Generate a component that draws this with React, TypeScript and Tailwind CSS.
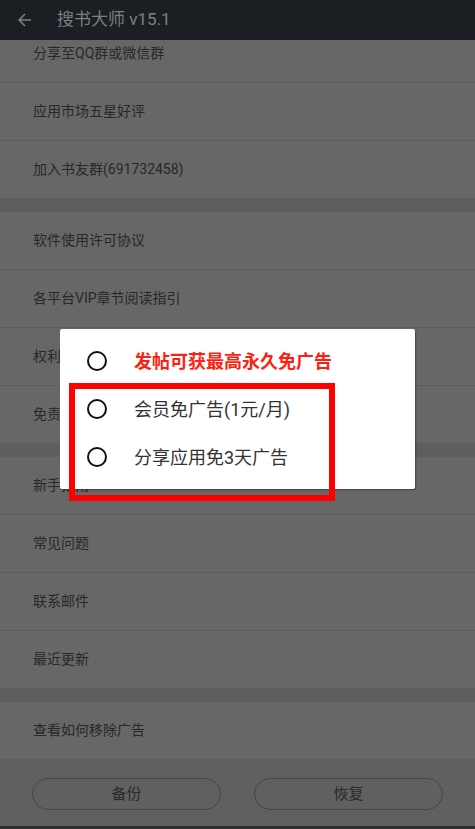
import React from "react";

const font = { fontFamily: "Roboto, 'Noto Sans CJK SC', sans-serif" };

function Row({ label, last }: { label: string; last?: boolean }) {
  return (
    <div
      className={
        "flex items-center pl-[33px] text-[14px] text-[#282828] " +
        (last ? "h-[57px]" : "h-[58px] border-b border-[#5d5d5d]")
      }
    >
      {label}
    </div>
  );
}

function Group({ items, first }: { items: string[]; first?: boolean }) {
  return (
    <div className={"flex flex-col bg-[#676767] " + (first ? "" : "mt-[14px]")}>
      {items.map((t, i) => (
        <Row key={t} label={t} last={i === items.length - 1} />
      ))}
    </div>
  );
}

function Radio({ label, red }: { label: string; red?: boolean }) {
  return (
    <div className="flex h-[48px] items-center pl-[27px]">
      <div className="h-[20px] w-[20px] rounded-full border-2 border-[#111]" />
      <span
        className={
          "ml-[27px] text-[18px] " +
          (red ? "font-bold text-[#ff1f10]" : "text-[#333]")
        }
      >
        {label}
      </span>
    </div>
  );
}

export default function App() {
  return (
    <div className="relative flex h-[829px] w-[475px] flex-col overflow-hidden bg-[#5e5e5e]" style={font}>
      <div className="z-10 flex h-[40px] shrink-0 items-center bg-[#1b1f23]">
        <svg width="14" height="14" viewBox="0 0 14 14" className="ml-[18px]" fill="none" stroke="#7f8285" strokeWidth="1.5">
          <path d="M13 7H1.5M7 1L1 7l6 6" />
        </svg>
        <span className="ml-[25px] text-[17px] text-[#7c7f82]">搜书大师 v15.1</span>
      </div>
      <div className="flex-1 overflow-hidden">
        <div className="-mt-[15px] flex flex-col">
          <Group first items={["分享至QQ群或微信群", "应用市场五星好评", "加入书友群(691732458)"]} />
          <Group items={["软件使用许可协议", "各平台VIP章节阅读指引", "权利声明", "免责声明"]} />
          <Group items={["新手指南", "常见问题", "联系邮件", "最近更新"]} />
          <Group items={["查看如何移除广告"]} />
        </div>
      </div>
      <div className="flex h-[70px] shrink-0 flex-col bg-[#606060]">
        <div className="flex flex-1 items-start gap-[33px] px-[32px] pt-[19px]">
          <div className="flex h-[32px] flex-1 items-center justify-center rounded-full border-[1.5px] border-[#474747] text-[15px] text-[#2a2a2a]">
            备份
          </div>
          <div className="flex h-[32px] flex-1 items-center justify-center rounded-full border-[1.5px] border-[#474747] text-[15px] text-[#2a2a2a]">
            恢复
          </div>
        </div>
        <div className="h-[3px] bg-[#2e2e2e]" />
      </div>

      <div className="absolute left-[60px] top-[329px] flex w-[355px] flex-col rounded-[2px] bg-white py-[8px] shadow-[1px_1px_2px_rgba(0,0,0,0.35)]">
        <Radio red label="发帖可获最高永久免广告" />
        <Radio label="会员免广告(1元/月)" />
        <Radio label="分享应用免3天广告" />
      </div>
      <div className="absolute left-[69px] top-[383px] h-[118px] w-[266px] border-[6px] border-[#ff0000]" />
    </div>
  );
}
